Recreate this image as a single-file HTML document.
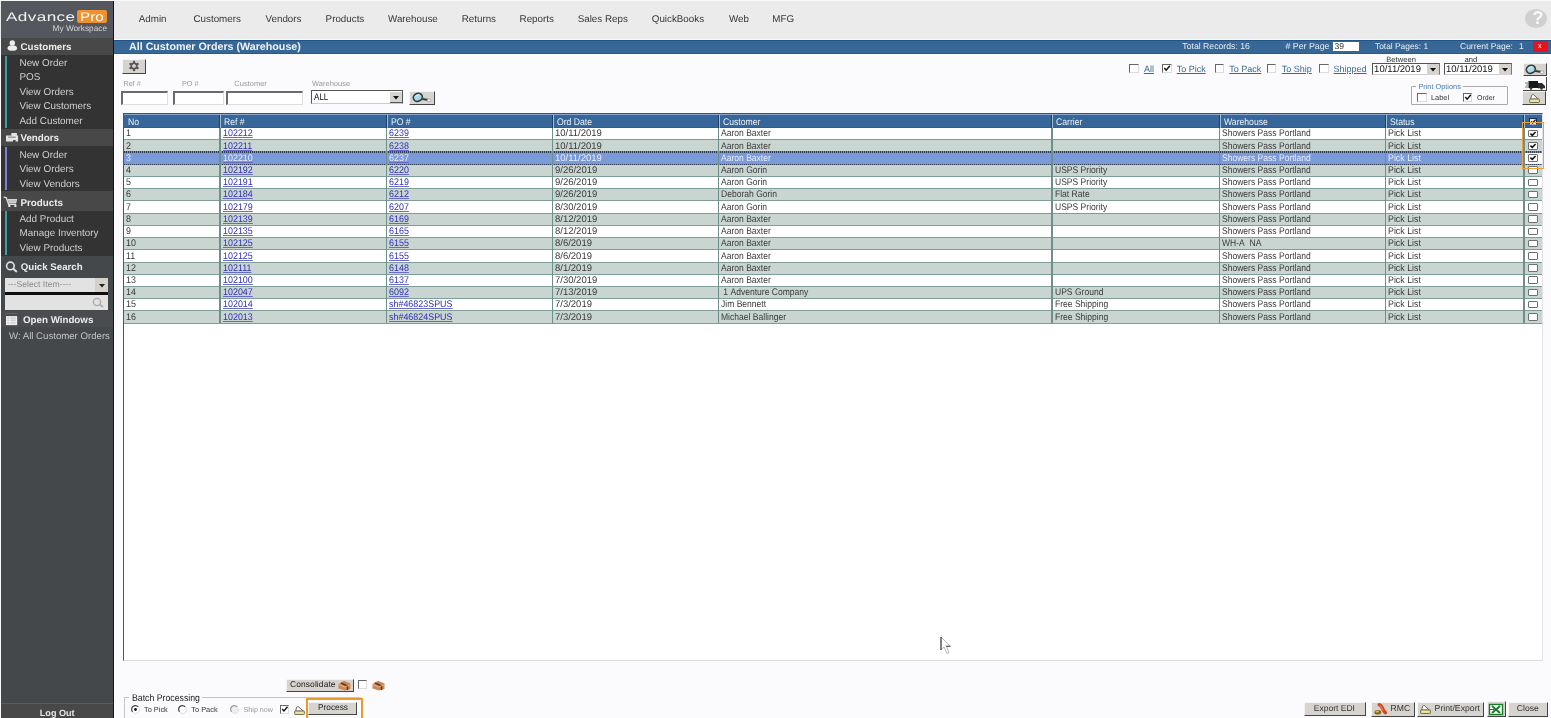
<!DOCTYPE html>
<html><head><meta charset="utf-8"><style>
*{margin:0;padding:0;box-sizing:border-box}
html,body{width:1551px;height:718px;overflow:hidden;background:#fbfbfd;font-family:"Liberation Sans",sans-serif;position:relative;-webkit-font-smoothing:antialiased;text-rendering:geometricPrecision}
.a{position:absolute;white-space:nowrap;line-height:normal}
svg.a{overflow:visible}
.btn{position:absolute;background:#d7d4d0;border-top:1px solid #f4f4f4;border-left:1px solid #f4f4f4;border-right:1.5px solid #444;border-bottom:1.5px solid #444}
.inp{position:absolute;background:#fff;border:1px solid #dedede;border-top:2px solid #6a6a6a;border-left:2px solid #6a6a6a}
</style></head>
<body>
<div id="root" style="position:absolute;left:0;top:0;width:1551px;height:718px;will-change:transform">
<div class="a" style="left:0.00px;top:0.00px;width:1551.00px;height:39.00px;background:#ebebeb;border-top:1px solid #f8f8f8"></div>
<div class="a" style="left:138.80px;top:13.91px;font-size:9.8px;color:#363636;">Admin</div>
<div class="a" style="left:193.50px;top:13.91px;font-size:9.8px;color:#363636;">Customers</div>
<div class="a" style="left:265.50px;top:13.91px;font-size:9.8px;color:#363636;">Vendors</div>
<div class="a" style="left:325.60px;top:13.91px;font-size:9.8px;color:#363636;">Products</div>
<div class="a" style="left:388.00px;top:13.91px;font-size:9.8px;color:#363636;">Warehouse</div>
<div class="a" style="left:461.70px;top:13.91px;font-size:9.8px;color:#363636;">Returns</div>
<div class="a" style="left:519.60px;top:13.91px;font-size:9.8px;color:#363636;">Reports</div>
<div class="a" style="left:577.70px;top:13.91px;font-size:9.8px;color:#363636;">Sales Reps</div>
<div class="a" style="left:651.80px;top:13.91px;font-size:9.8px;color:#363636;">QuickBooks</div>
<div class="a" style="left:729.00px;top:13.91px;font-size:9.8px;color:#363636;">Web</div>
<div class="a" style="left:772.30px;top:13.91px;font-size:9.8px;color:#363636;">MFG</div>
<div class="a" style="left:1525.00px;top:8.60px;width:22.00px;height:19.00px;background:#d0d0d0;border-radius:50%"></div>
<div class="a" style="left:1532.20px;top:6.51px;font-size:18.5px;color:#f8f8f8;font-weight:bold">?</div>
<div class="a" style="left:1.00px;top:1.00px;width:113.00px;height:717.00px;background:#45484b;border-right:1px solid #151515"></div>
<div class="a" style="left:1.00px;top:1.00px;width:112.00px;height:37.00px;background:#54575e"></div>
<div class="a" style="left:6.30px;top:9.59px;font-size:12.5px;color:#f2f2f2;transform:scaleX(1.37);transform-origin:0 0;letter-spacing:0.3px">Advance</div>
<div class="a" style="left:77.00px;top:9.60px;width:30.00px;height:13.70px;background:#f0912c;border-radius:2px"></div>
<div class="a" style="left:79.50px;top:9.59px;font-size:12.5px;color:#fff;transform:scaleX(1.22);transform-origin:0 0">Pro</div>
<div class="a" style="left:52.60px;top:23.83px;font-size:8.25px;color:#d4d4d4;">My Workspace</div>
<div class="a" style="left:1.00px;top:38.00px;width:112.00px;height:17.00px;background:#484848"></div>
<div class="a" style="left:20.40px;top:42.03px;font-size:9.8px;color:#ececec;font-weight:bold">Customers</div>
<svg class="a" style="left:6px;top:39px" width="14" height="14" viewBox="0 0 14 14"><circle cx="6.3" cy="4" r="2.7" fill="#ececec"/><path d="M1.5 9.5 C1.5 7 3.5 6.6 6.3 6.6 C9.1 6.6 11.1 7 11.1 9.5 C11.1 11.3 9 11.8 6.3 11.8 C3.6 11.8 1.5 11.3 1.5 9.5Z" fill="#ececec"/></svg>
<div class="a" style="left:1.00px;top:55.00px;width:112.00px;height:73.50px;background:#333333"></div>
<div class="a" style="left:5.00px;top:56.00px;width:2.00px;height:71.50px;background:#3b9ea2"></div>
<div class="a" style="left:19.50px;top:58.38px;font-size:9.9px;color:#d0d0d0;">New Order</div>
<div class="a" style="left:19.50px;top:72.38px;font-size:9.9px;color:#d0d0d0;">POS</div>
<div class="a" style="left:19.50px;top:86.78px;font-size:9.9px;color:#d0d0d0;">View Orders</div>
<div class="a" style="left:19.50px;top:100.78px;font-size:9.9px;color:#d0d0d0;">View Customers</div>
<div class="a" style="left:19.50px;top:115.98px;font-size:9.9px;color:#d0d0d0;">Add Customer</div>
<div class="a" style="left:1.00px;top:128.50px;width:112.00px;height:17.80px;background:#484848"></div>
<div class="a" style="left:20.40px;top:133.43px;font-size:9.8px;color:#ececec;font-weight:bold">Vendors</div>
<svg class="a" style="left:5.9px;top:132.6px" width="12.1" height="8.4" viewBox="0 0 12.1 8.4"><path d="M5.4 0 H10.9 V2.4 H12.1 V8.4 H9.6 V7 H7 V8.4 H0 V2.4 H5.4Z" fill="#e4e4e4"/><rect x="2.1" y="3.6" width="7.7" height="1.2" fill="#888"/></svg>
<div class="a" style="left:1.00px;top:146.30px;width:112.00px;height:44.50px;background:#333333"></div>
<div class="a" style="left:5.00px;top:147.30px;width:2.00px;height:42.50px;background:#7c80d6"></div>
<div class="a" style="left:19.50px;top:149.68px;font-size:9.9px;color:#d0d0d0;">New Order</div>
<div class="a" style="left:19.50px;top:164.18px;font-size:9.9px;color:#d0d0d0;">View Orders</div>
<div class="a" style="left:19.50px;top:178.58px;font-size:9.9px;color:#d0d0d0;">View Vendors</div>
<div class="a" style="left:1.00px;top:190.80px;width:112.00px;height:19.90px;background:#484848"></div>
<div class="a" style="left:20.40px;top:198.03px;font-size:9.8px;color:#ececec;font-weight:bold">Products</div>
<svg class="a" style="left:3px;top:196px" width="16" height="12" viewBox="0 0 16 12"><path d="M1.2 1.2 L3.3 1.8 L5.6 8.2 H12.6" stroke="#ddd" stroke-width="1.4" fill="none" stroke-linecap="round"/><path d="M4.6 3 H14.2 L13.3 7 H5.8Z" fill="#d4d4d4"/><path d="M5 5 H13.6" stroke="#999" stroke-width="0.6"/><circle cx="6.3" cy="9.9" r="1.2" fill="#e4e4e4"/><circle cx="12.4" cy="9.9" r="1.2" fill="#e4e4e4"/></svg>
<div class="a" style="left:1.00px;top:210.70px;width:112.00px;height:44.90px;background:#333333"></div>
<div class="a" style="left:5.00px;top:211.20px;width:2.00px;height:43.90px;background:#3b9ea2"></div>
<div class="a" style="left:19.50px;top:214.08px;font-size:9.9px;color:#d0d0d0;">Add Product</div>
<div class="a" style="left:19.50px;top:228.38px;font-size:9.9px;color:#d0d0d0;">Manage Inventory</div>
<div class="a" style="left:19.50px;top:242.88px;font-size:9.9px;color:#d0d0d0;">View Products</div>
<div class="a" style="left:20.70px;top:261.83px;font-size:9.7px;color:#ececec;font-weight:bold">Quick Search</div>
<svg class="a" style="left:4px;top:260px" width="14" height="13" viewBox="0 0 14 13"><circle cx="6.4" cy="5.9" r="3.8" stroke="#e0e0e0" stroke-width="1.6" fill="none"/><path d="M9.3 8.8 L12.3 11.4" stroke="#e0e0e0" stroke-width="2" stroke-linecap="round"/></svg>
<div class="a" style="left:4.90px;top:277.90px;width:103.10px;height:14.60px;background:#e3e2e2"></div>
<div class="a" style="left:8.00px;top:279.38px;font-size:8.6px;color:#8a8a8a;">---Select Item----</div>
<div class="a" style="left:95.40px;top:277.90px;width:12.60px;height:14.60px;background:#d5d1c9"></div>
<svg class="a" style="left:98.5px;top:283.5px" width="6" height="4"><path d="M0 0 L6 0 L3 3.5 Z" fill="#222"/></svg>
<div class="a" style="left:4.90px;top:292.40px;width:103.10px;height:2.20px;background:#0e0e0e"></div>
<div class="a" style="left:4.90px;top:294.60px;width:103.10px;height:15.00px;background:#e3e2e2"></div>
<svg class="a" style="left:91px;top:297px" width="14" height="11"><circle cx="6" cy="5" r="3.6" stroke="#aaa" stroke-width="1.4" fill="none"/><path d="M8.6 7.4 L12 10" stroke="#aaa" stroke-width="1.8"/></svg>
<div class="a" style="left:1.00px;top:311.00px;width:112.00px;height:16.00px;background:#4a4c4f"></div>
<div class="a" style="left:23.00px;top:315.03px;font-size:9.75px;color:#ececec;font-weight:bold">Open Windows</div>
<div class="a" style="left:5.20px;top:313.00px;width:12.00px;height:1.40px;background:#606062"></div>
<svg class="a" style="left:5.6px;top:315.6px" width="11.2" height="9.2" viewBox="0 0 11.4 9.2"><rect width="11.4" height="9.2" fill="#efefef"/><path d="M1.3 2 H3.3 M4.5 2 H10 M1.3 4.2 H3.3 M4.5 4.2 H10 M1.3 7 H3.3 M4.5 7 H10" stroke="#aaa" stroke-width="0.7"/></svg>
<div class="a" style="left:9.00px;top:330.84px;font-size:9.65px;color:#c4c4c4;">W: All Customer Orders</div>
<div class="a" style="left:1.00px;top:702.50px;width:112.00px;height:15.50px;background:#484848;border-top:1px solid #5c5c5c"></div>
<div class="a" style="left:39.80px;top:707.56px;font-size:9.1px;color:#e6e6e6;font-weight:bold">Log Out</div>
<div class="a" style="left:114.00px;top:39.70px;width:1437.00px;height:14.00px;background:#376797;border-top:1px solid #235284;border-bottom:1px solid #2b5a8a"></div>
<div class="a" style="left:129.00px;top:41.07px;font-size:10.7px;color:#f2f4f6;font-weight:bold">All Customer Orders (Warehouse)</div>
<div class="a" style="left:1182.30px;top:40.98px;font-size:8.7px;color:#e8eef4;">Total Records: 16</div>
<div class="a" style="left:1285.50px;top:40.99px;font-size:8.8px;color:#e8eef4;"># Per Page</div>
<div class="a" style="left:1333.40px;top:42.00px;width:25.30px;height:9.00px;background:#fff"></div>
<div class="a" style="left:1334.50px;top:40.95px;font-size:8.5px;color:#333;">39</div>
<div class="a" style="left:1375.00px;top:40.94px;font-size:8.4px;color:#e8eef4;">Total Pages: 1</div>
<div class="a" style="left:1460.00px;top:40.95px;font-size:8.5px;color:#e8eef4;">Current Page:</div>
<div class="a" style="left:1519.00px;top:40.95px;font-size:8.5px;color:#e8eef4;">1</div>
<div class="a" style="left:1533.00px;top:41.40px;width:15.40px;height:10.60px;background:#e5141c"></div>
<div class="a" style="left:1538.00px;top:43.41px;font-size:7px;color:#fff;">x</div>
<div class="btn" style="left:122px;top:59px;width:24.3px;height:14.6px"></div>
<svg class="a" style="left:127.8px;top:60px" width="12" height="12" viewBox="-6 -6 12 12"><g fill="#555"><circle cx="0.00" cy="-4.00" r="1.25"/><circle cx="3.46" cy="-2.00" r="1.25"/><circle cx="3.46" cy="2.00" r="1.25"/><circle cx="0.00" cy="4.00" r="1.25"/><circle cx="-3.46" cy="2.00" r="1.25"/><circle cx="-3.46" cy="-2.00" r="1.25"/></g><circle r="2.75" fill="none" stroke="#555" stroke-width="1.7"/></svg>
<div class="a" style="left:123.40px;top:78.76px;font-size:7.3px;color:#999;">Ref #</div>
<div class="a" style="left:182.00px;top:78.76px;font-size:7.3px;color:#999;">PO #</div>
<div class="a" style="left:234.30px;top:79.45px;font-size:7.5px;color:#999;">Customer</div>
<div class="a" style="left:312.00px;top:79.45px;font-size:7.5px;color:#999;">Warehouse</div>
<div class="inp" style="left:121.2px;top:90.7px;width:47px;height:14px"></div>
<div class="inp" style="left:173.4px;top:90.7px;width:50.2px;height:14px"></div>
<div class="inp" style="left:225.9px;top:90.7px;width:77.1px;height:14px"></div>
<div class="a" style="left:311.10px;top:90.00px;width:92.00px;height:14.20px;background:#fff;border-top:1.5px solid #555;border-left:1.5px solid #555;border-right:1.5px solid #555;border-bottom:1px solid #ccc"></div>
<div class="a" style="left:313.50px;top:92.14px;font-size:9.6px;color:#111;transform:scaleX(0.84);transform-origin:0 0">ALL</div>
<div class="a" style="left:390.00px;top:91.50px;width:12.50px;height:11.60px;background:#d7d4d0;border-right:1px solid #555;border-bottom:1px solid #555"></div>
<svg class="a" style="left:393.3px;top:95.5px" width="6" height="4"><path d="M0 0 L6 0 L3 3.5 Z" fill="#111"/></svg>
<div class="btn" style="left:409.3px;top:91.4px;width:26px;height:14px"></div>
<svg class="a" style="left:411.80px;top:92.20px" width="20" height="12" viewBox="0 0 20 12"><ellipse cx="5.8" cy="5.3" rx="4.6" ry="3.9" transform="rotate(-25 5.8 5.3)" fill="#a8dae6" stroke="#2e3c40" stroke-width="1.6"/><path d="M3.5 4.5 Q5 2.6 7.5 3" stroke="#d8f4fa" stroke-width="1.2" fill="none"/><path d="M9.8 6.6 L16 8" stroke="#3a3a3a" stroke-width="2.2"/><path d="M10.5 6 L15.5 6.8" stroke="#999" stroke-width="0.6"/><ellipse cx="17" cy="8.3" rx="1.8" ry="1.5" fill="#f4f4f4" stroke="#888" stroke-width="0.6"/></svg>
<div class="a" style="left:1129.40px;top:64.00px;width:9.60px;height:8.60px;background:#fff;border-top:1.5px solid #666;border-left:1.5px solid #666;border-right:1px solid #ddd;border-bottom:1px solid #ddd"></div>
<div class="a" style="left:1143.90px;top:63.94px;font-size:9px;color:#3b6a88;text-decoration:underline">All</div>
<div class="a" style="left:1162.00px;top:64.00px;width:9.60px;height:8.60px;background:#fff;border-top:1.5px solid #666;border-left:1.5px solid #666;border-right:1px solid #ddd;border-bottom:1px solid #ddd"></div>
<svg class="a" style="left:1162.00px;top:64.00px" width="9.6" height="8.6" viewBox="0 0 10 9"><path d="M2.4 4.2 L4.3 6.4 L8.2 1.8" stroke="#111" stroke-width="1.5" fill="none"/></svg>
<div class="a" style="left:1176.70px;top:63.94px;font-size:9px;color:#3b6a88;text-decoration:underline">To Pick</div>
<div class="a" style="left:1214.80px;top:64.00px;width:9.60px;height:8.60px;background:#fff;border-top:1.5px solid #666;border-left:1.5px solid #666;border-right:1px solid #ddd;border-bottom:1px solid #ddd"></div>
<div class="a" style="left:1229.30px;top:63.94px;font-size:9px;color:#3b6a88;text-decoration:underline">To Pack</div>
<div class="a" style="left:1266.70px;top:64.00px;width:9.60px;height:8.60px;background:#fff;border-top:1.5px solid #666;border-left:1.5px solid #666;border-right:1px solid #ddd;border-bottom:1px solid #ddd"></div>
<div class="a" style="left:1281.80px;top:63.94px;font-size:9px;color:#3b6a88;text-decoration:underline">To Ship</div>
<div class="a" style="left:1319.00px;top:64.00px;width:9.60px;height:8.60px;background:#fff;border-top:1.5px solid #666;border-left:1.5px solid #666;border-right:1px solid #ddd;border-bottom:1px solid #ddd"></div>
<div class="a" style="left:1333.60px;top:63.94px;font-size:9px;color:#3b6a88;text-decoration:underline">Shipped</div>
<div class="a" style="left:1386.30px;top:54.55px;font-size:7.6px;color:#333;">Between</div>
<div class="a" style="left:1464.50px;top:54.55px;font-size:7.6px;color:#333;">and</div>
<div class="a" style="left:1371.60px;top:62.60px;width:68.70px;height:12.80px;background:#fff;border-top:1.5px solid #555;border-left:1.5px solid #555;border-right:1.5px solid #777;border-bottom:1px solid #ccc"></div>
<div class="a" style="left:1374.10px;top:63.54px;font-size:9.5px;color:#111;">10/11/2019</div>
<div class="a" style="left:1426.60px;top:63.60px;width:12.50px;height:11.00px;background:#d7d4d0"></div>
<svg class="a" style="left:1430.10px;top:67.5px" width="6" height="4"><path d="M0 0 L6 0 L3 3.5 Z" fill="#111"/></svg>
<div class="a" style="left:1443.50px;top:62.60px;width:68.70px;height:12.80px;background:#fff;border-top:1.5px solid #555;border-left:1.5px solid #555;border-right:1.5px solid #777;border-bottom:1px solid #ccc"></div>
<div class="a" style="left:1446.00px;top:63.54px;font-size:9.5px;color:#111;">10/11/2019</div>
<div class="a" style="left:1498.50px;top:63.60px;width:12.50px;height:11.00px;background:#d7d4d0"></div>
<svg class="a" style="left:1502.00px;top:67.5px" width="6" height="4"><path d="M0 0 L6 0 L3 3.5 Z" fill="#111"/></svg>
<div class="a" style="left:1411.20px;top:85.60px;width:96.50px;height:19.00px;border:1px solid #aaa;border-radius:1px"></div>
<div class="a" style="left:1416.00px;top:83.00px;width:47.00px;height:6.00px;background:#fbfbfd"></div>
<div class="a" style="left:1418.40px;top:81.66px;font-size:7.35px;color:#4a7ab0;">Print Options</div>
<div class="a" style="left:1417.20px;top:93.40px;width:9.60px;height:8.60px;background:#fff;border-top:1.5px solid #666;border-left:1.5px solid #666;border-right:1px solid #ddd;border-bottom:1px solid #ddd"></div>
<div class="a" style="left:1431.00px;top:93.06px;font-size:7.4px;color:#333;">Label</div>
<div class="a" style="left:1462.70px;top:93.40px;width:9.60px;height:8.60px;background:#fff;border-top:1.5px solid #666;border-left:1.5px solid #666;border-right:1px solid #ddd;border-bottom:1px solid #ddd"></div>
<svg class="a" style="left:1462.70px;top:93.40px" width="9.6" height="8.6" viewBox="0 0 10 9"><path d="M2.4 4.2 L4.3 6.4 L8.2 1.8" stroke="#111" stroke-width="1.5" fill="none"/></svg>
<div class="a" style="left:1477.00px;top:95.01px;font-size:7px;color:#333;">Order</div>
<div class="btn" style="left:1522.5px;top:62.9px;width:24.5px;height:13.3px"></div>
<svg class="a" style="left:1525.00px;top:63.70px" width="20" height="12" viewBox="0 0 20 12"><ellipse cx="5.8" cy="5.3" rx="4.6" ry="3.9" transform="rotate(-25 5.8 5.3)" fill="#a8dae6" stroke="#2e3c40" stroke-width="1.6"/><path d="M3.5 4.5 Q5 2.6 7.5 3" stroke="#d8f4fa" stroke-width="1.2" fill="none"/><path d="M9.8 6.6 L16 8" stroke="#3a3a3a" stroke-width="2.2"/><path d="M10.5 6 L15.5 6.8" stroke="#999" stroke-width="0.6"/><ellipse cx="17" cy="8.3" rx="1.8" ry="1.5" fill="#f4f4f4" stroke="#888" stroke-width="0.6"/></svg>
<div class="a" style="left:1522.50px;top:77.40px;width:24.50px;height:13.20px;border-right:1.5px solid #444;border-bottom:1.5px solid #444"></div>
<svg class="a" style="left:1524px;top:80px" width="22" height="10" viewBox="0 0 22 10"><path d="M1 3h3M2 5h2M1 7h3" stroke="#555" stroke-width="0.8"/><rect x="4.5" y="1" width="9.5" height="7" fill="#1a1a1a"/><path d="M14 3 h4 l3 3 v2.2 h-7z" fill="#2a2a2a"/><circle cx="7" cy="8.5" r="1.3" fill="#333"/><circle cx="17.5" cy="8.5" r="1.3" fill="#333"/></svg>
<div class="btn" style="left:1522px;top:90.8px;width:24px;height:14.6px"></div>
<svg class="a" style="left:1529.00px;top:93.50px" width="11" height="9" viewBox="0 0 11 9"><path d="M1.6 5.2 L2.6 1.2 Q3.2 0.4 4.4 0.6 L9.4 5.2 Z" fill="#fafafa" stroke="#555" stroke-width="0.9"/><rect x="0.6" y="5" width="9.8" height="3.5" rx="0.6" fill="#e6df8c" stroke="#6a6a4a" stroke-width="0.9"/><path d="M2 6.6 H9" stroke="#f6f2c0" stroke-width="0.6"/></svg>
<div class="a" style="left:123.00px;top:112.80px;width:1419.50px;height:548.70px;background:#fff;border-left:1.5px solid #555;border-top:1.3px solid #4a5058;border-right:1px solid #e4e4e8;border-bottom:1px solid #dcdce0"></div>
<div class="a" style="left:124.00px;top:114.00px;width:1417.50px;height:13.60px;background:#36669a;border-top:1.2px solid #8aa8cc"></div>
<div class="a" style="left:124.00px;top:126.80px;width:1417.50px;height:0.80px;background:#3d5a7c"></div>
<div class="a" style="left:127.60px;top:116.64px;font-size:9.6px;color:#eef2f6;transform:scaleX(0.9);transform-origin:0 0">No</div>
<div class="a" style="left:224.10px;top:116.64px;font-size:9.6px;color:#eef2f6;transform:scaleX(0.9);transform-origin:0 0">Ref #</div>
<div class="a" style="left:219.00px;top:114.50px;width:1.00px;height:13.10px;background:#1f3f66"></div>
<div class="a" style="left:220.00px;top:114.50px;width:1.00px;height:13.10px;background:#a9bdd0"></div>
<div class="a" style="left:390.60px;top:116.64px;font-size:9.6px;color:#eef2f6;transform:scaleX(0.9);transform-origin:0 0">PO #</div>
<div class="a" style="left:385.50px;top:114.50px;width:1.00px;height:13.10px;background:#1f3f66"></div>
<div class="a" style="left:386.50px;top:114.50px;width:1.00px;height:13.10px;background:#a9bdd0"></div>
<div class="a" style="left:556.60px;top:116.64px;font-size:9.6px;color:#eef2f6;transform:scaleX(0.9);transform-origin:0 0">Ord Date</div>
<div class="a" style="left:551.50px;top:114.50px;width:1.00px;height:13.10px;background:#1f3f66"></div>
<div class="a" style="left:552.50px;top:114.50px;width:1.00px;height:13.10px;background:#a9bdd0"></div>
<div class="a" style="left:722.60px;top:116.64px;font-size:9.6px;color:#eef2f6;transform:scaleX(0.9);transform-origin:0 0">Customer</div>
<div class="a" style="left:717.50px;top:114.50px;width:1.00px;height:13.10px;background:#1f3f66"></div>
<div class="a" style="left:718.50px;top:114.50px;width:1.00px;height:13.10px;background:#a9bdd0"></div>
<div class="a" style="left:1056.10px;top:116.64px;font-size:9.6px;color:#eef2f6;transform:scaleX(0.9);transform-origin:0 0">Carrier</div>
<div class="a" style="left:1051.00px;top:114.50px;width:1.00px;height:13.10px;background:#1f3f66"></div>
<div class="a" style="left:1052.00px;top:114.50px;width:1.00px;height:13.10px;background:#a9bdd0"></div>
<div class="a" style="left:1223.60px;top:116.64px;font-size:9.6px;color:#eef2f6;transform:scaleX(0.9);transform-origin:0 0">Warehouse</div>
<div class="a" style="left:1218.50px;top:114.50px;width:1.00px;height:13.10px;background:#1f3f66"></div>
<div class="a" style="left:1219.50px;top:114.50px;width:1.00px;height:13.10px;background:#a9bdd0"></div>
<div class="a" style="left:1389.60px;top:116.64px;font-size:9.6px;color:#eef2f6;transform:scaleX(0.9);transform-origin:0 0">Status</div>
<div class="a" style="left:1384.50px;top:114.50px;width:1.00px;height:13.10px;background:#1f3f66"></div>
<div class="a" style="left:1385.50px;top:114.50px;width:1.00px;height:13.10px;background:#a9bdd0"></div>
<div class="a" style="left:1523.00px;top:114.50px;width:1.00px;height:13.10px;background:#1f3f66"></div>
<div class="a" style="left:1524.00px;top:114.50px;width:1.00px;height:13.10px;background:#a9bdd0"></div>
<div class="a" style="left:1529.00px;top:117.90px;width:8.20px;height:7.20px;background:#e8e8e8;border:1px solid #1e2e50;border-bottom-color:#aab"></div>
<svg class="a" style="left:1529px;top:117.9px" width="8.2" height="7.2" viewBox="0 0 8.2 7.2"><path d="M2 3.4 L3.6 5 L6.6 1.6" stroke="#222" stroke-width="1.4" fill="none"/></svg>
<div class="a" style="left:124.00px;top:127.60px;width:1417.50px;height:12.22px;background:#ffffff"></div>
<div class="a" style="left:126.40px;top:128.34px;font-size:9.6px;color:#3a3a3a;transform:scaleX(0.93);transform-origin:0 0;">1</div>
<div class="a" style="left:222.90px;top:128.34px;font-size:9.6px;color:#3030b8;text-decoration:underline;text-decoration-color:#6a6ac0;transform:scaleX(0.93);transform-origin:0 0;">102212</div>
<div class="a" style="left:389.40px;top:128.34px;font-size:9.6px;color:#3030b8;text-decoration:underline;text-decoration-color:#6a6ac0;transform:scaleX(0.93);transform-origin:0 0;">6239</div>
<div class="a" style="left:555.40px;top:128.34px;font-size:9.6px;color:#3a3a3a;transform:scaleX(0.99);transform-origin:0 0;">10/11/2019</div>
<div class="a" style="left:721.40px;top:128.34px;font-size:9.6px;color:#3a3a3a;transform:scaleX(0.89);transform-origin:0 0;">Aaron&nbsp;Baxter</div>
<div class="a" style="left:1222.40px;top:128.34px;font-size:9.6px;color:#3a3a3a;transform:scaleX(0.89);transform-origin:0 0;">Showers&nbsp;Pass&nbsp;Portland</div>
<div class="a" style="left:1388.40px;top:128.34px;font-size:9.6px;color:#3a3a3a;transform:scaleX(0.92);transform-origin:0 0;">Pick&nbsp;List</div>
<div class="a" style="left:1528.10px;top:129.80px;width:9.70px;height:7.60px;background:#fff;border:1.2px solid #707070;border-radius:1px"></div>
<svg class="a" style="left:1528.1px;top:129.80px" width="9.7" height="7.6" viewBox="0 0 9.7 7.6"><path d="M2.4 3.6 L4.3 5.4 L7.6 2" stroke="#111" stroke-width="1.5" fill="none"/></svg>
<div class="a" style="left:124.00px;top:139.82px;width:1417.50px;height:12.22px;background:#c9d5d1"></div>
<div class="a" style="left:126.40px;top:140.56px;font-size:9.6px;color:#3a3a3a;transform:scaleX(0.93);transform-origin:0 0;">2</div>
<div class="a" style="left:222.90px;top:140.56px;font-size:9.6px;color:#3030b8;text-decoration:underline;text-decoration-color:#6a6ac0;transform:scaleX(0.93);transform-origin:0 0;">102211</div>
<div class="a" style="left:389.40px;top:140.56px;font-size:9.6px;color:#3030b8;text-decoration:underline;text-decoration-color:#6a6ac0;transform:scaleX(0.93);transform-origin:0 0;">6238</div>
<div class="a" style="left:555.40px;top:140.56px;font-size:9.6px;color:#3a3a3a;transform:scaleX(0.99);transform-origin:0 0;">10/11/2019</div>
<div class="a" style="left:721.40px;top:140.56px;font-size:9.6px;color:#3a3a3a;transform:scaleX(0.89);transform-origin:0 0;">Aaron&nbsp;Baxter</div>
<div class="a" style="left:1222.40px;top:140.56px;font-size:9.6px;color:#3a3a3a;transform:scaleX(0.89);transform-origin:0 0;">Showers&nbsp;Pass&nbsp;Portland</div>
<div class="a" style="left:1388.40px;top:140.56px;font-size:9.6px;color:#3a3a3a;transform:scaleX(0.92);transform-origin:0 0;">Pick&nbsp;List</div>
<div class="a" style="left:1528.10px;top:142.02px;width:9.70px;height:7.60px;background:#fff;border:1.2px solid #707070;border-radius:1px"></div>
<svg class="a" style="left:1528.1px;top:142.02px" width="9.7" height="7.6" viewBox="0 0 9.7 7.6"><path d="M2.4 3.6 L4.3 5.4 L7.6 2" stroke="#111" stroke-width="1.5" fill="none"/></svg>
<div class="a" style="left:124.00px;top:152.04px;width:1417.50px;height:12.22px;background:#7a9ad8"></div>
<div class="a" style="left:1524.00px;top:152.04px;width:17.50px;height:12.22px;background:#fff"></div>
<div class="a" style="left:126.40px;top:152.78px;font-size:9.6px;color:#e9eefb;transform:scaleX(0.93);transform-origin:0 0;">3</div>
<div class="a" style="left:222.90px;top:152.78px;font-size:9.6px;color:#e9eefb;text-decoration:underline;text-decoration-color:#6a6ac0;transform:scaleX(0.93);transform-origin:0 0;">102210</div>
<div class="a" style="left:389.40px;top:152.78px;font-size:9.6px;color:#e9eefb;text-decoration:underline;text-decoration-color:#6a6ac0;transform:scaleX(0.93);transform-origin:0 0;">6237</div>
<div class="a" style="left:555.40px;top:152.78px;font-size:9.6px;color:#e9eefb;transform:scaleX(0.99);transform-origin:0 0;">10/11/2019</div>
<div class="a" style="left:721.40px;top:152.78px;font-size:9.6px;color:#e9eefb;transform:scaleX(0.89);transform-origin:0 0;">Aaron&nbsp;Baxter</div>
<div class="a" style="left:1222.40px;top:152.78px;font-size:9.6px;color:#e9eefb;transform:scaleX(0.89);transform-origin:0 0;">Showers&nbsp;Pass&nbsp;Portland</div>
<div class="a" style="left:1388.40px;top:152.78px;font-size:9.6px;color:#e9eefb;transform:scaleX(0.92);transform-origin:0 0;">Pick&nbsp;List</div>
<div class="a" style="left:1528.10px;top:154.24px;width:9.70px;height:7.60px;background:#fff;border:1.2px solid #707070;border-radius:1px"></div>
<svg class="a" style="left:1528.1px;top:154.24px" width="9.7" height="7.6" viewBox="0 0 9.7 7.6"><path d="M2.4 3.6 L4.3 5.4 L7.6 2" stroke="#111" stroke-width="1.5" fill="none"/></svg>
<div class="a" style="left:124.00px;top:164.26px;width:1417.50px;height:12.22px;background:#c9d5d1"></div>
<div class="a" style="left:126.40px;top:165.00px;font-size:9.6px;color:#3a3a3a;transform:scaleX(0.93);transform-origin:0 0;">4</div>
<div class="a" style="left:222.90px;top:165.00px;font-size:9.6px;color:#3030b8;text-decoration:underline;text-decoration-color:#6a6ac0;transform:scaleX(0.93);transform-origin:0 0;">102192</div>
<div class="a" style="left:389.40px;top:165.00px;font-size:9.6px;color:#3030b8;text-decoration:underline;text-decoration-color:#6a6ac0;transform:scaleX(0.93);transform-origin:0 0;">6220</div>
<div class="a" style="left:555.40px;top:165.00px;font-size:9.6px;color:#3a3a3a;transform:scaleX(0.99);transform-origin:0 0;">9/26/2019</div>
<div class="a" style="left:721.40px;top:165.00px;font-size:9.6px;color:#3a3a3a;transform:scaleX(0.89);transform-origin:0 0;">Aaron&nbsp;Gorin</div>
<div class="a" style="left:1054.90px;top:165.00px;font-size:9.6px;color:#3a3a3a;transform:scaleX(0.89);transform-origin:0 0;">USPS&nbsp;Priority</div>
<div class="a" style="left:1222.40px;top:165.00px;font-size:9.6px;color:#3a3a3a;transform:scaleX(0.89);transform-origin:0 0;">Showers&nbsp;Pass&nbsp;Portland</div>
<div class="a" style="left:1388.40px;top:165.00px;font-size:9.6px;color:#3a3a3a;transform:scaleX(0.92);transform-origin:0 0;">Pick&nbsp;List</div>
<div class="a" style="left:1528.10px;top:166.46px;width:9.70px;height:7.60px;background:#fff;border:1.2px solid #707070;border-radius:1px"></div>
<div class="a" style="left:124.00px;top:176.48px;width:1417.50px;height:12.22px;background:#ffffff"></div>
<div class="a" style="left:126.40px;top:177.22px;font-size:9.6px;color:#3a3a3a;transform:scaleX(0.93);transform-origin:0 0;">5</div>
<div class="a" style="left:222.90px;top:177.22px;font-size:9.6px;color:#3030b8;text-decoration:underline;text-decoration-color:#6a6ac0;transform:scaleX(0.93);transform-origin:0 0;">102191</div>
<div class="a" style="left:389.40px;top:177.22px;font-size:9.6px;color:#3030b8;text-decoration:underline;text-decoration-color:#6a6ac0;transform:scaleX(0.93);transform-origin:0 0;">6219</div>
<div class="a" style="left:555.40px;top:177.22px;font-size:9.6px;color:#3a3a3a;transform:scaleX(0.99);transform-origin:0 0;">9/26/2019</div>
<div class="a" style="left:721.40px;top:177.22px;font-size:9.6px;color:#3a3a3a;transform:scaleX(0.89);transform-origin:0 0;">Aaron&nbsp;Gorin</div>
<div class="a" style="left:1054.90px;top:177.22px;font-size:9.6px;color:#3a3a3a;transform:scaleX(0.89);transform-origin:0 0;">USPS&nbsp;Priority</div>
<div class="a" style="left:1222.40px;top:177.22px;font-size:9.6px;color:#3a3a3a;transform:scaleX(0.89);transform-origin:0 0;">Showers&nbsp;Pass&nbsp;Portland</div>
<div class="a" style="left:1388.40px;top:177.22px;font-size:9.6px;color:#3a3a3a;transform:scaleX(0.92);transform-origin:0 0;">Pick&nbsp;List</div>
<div class="a" style="left:1528.10px;top:178.68px;width:9.70px;height:7.60px;background:#fff;border:1.2px solid #707070;border-radius:1px"></div>
<div class="a" style="left:124.00px;top:188.70px;width:1417.50px;height:12.22px;background:#c9d5d1"></div>
<div class="a" style="left:126.40px;top:189.44px;font-size:9.6px;color:#3a3a3a;transform:scaleX(0.93);transform-origin:0 0;">6</div>
<div class="a" style="left:222.90px;top:189.44px;font-size:9.6px;color:#3030b8;text-decoration:underline;text-decoration-color:#6a6ac0;transform:scaleX(0.93);transform-origin:0 0;">102184</div>
<div class="a" style="left:389.40px;top:189.44px;font-size:9.6px;color:#3030b8;text-decoration:underline;text-decoration-color:#6a6ac0;transform:scaleX(0.93);transform-origin:0 0;">6212</div>
<div class="a" style="left:555.40px;top:189.44px;font-size:9.6px;color:#3a3a3a;transform:scaleX(0.99);transform-origin:0 0;">9/26/2019</div>
<div class="a" style="left:721.40px;top:189.44px;font-size:9.6px;color:#3a3a3a;transform:scaleX(0.89);transform-origin:0 0;">Deborah&nbsp;Gorin</div>
<div class="a" style="left:1054.90px;top:189.44px;font-size:9.6px;color:#3a3a3a;transform:scaleX(0.89);transform-origin:0 0;">Flat&nbsp;Rate</div>
<div class="a" style="left:1222.40px;top:189.44px;font-size:9.6px;color:#3a3a3a;transform:scaleX(0.89);transform-origin:0 0;">Showers&nbsp;Pass&nbsp;Portland</div>
<div class="a" style="left:1388.40px;top:189.44px;font-size:9.6px;color:#3a3a3a;transform:scaleX(0.92);transform-origin:0 0;">Pick&nbsp;List</div>
<div class="a" style="left:1528.10px;top:190.90px;width:9.70px;height:7.60px;background:#fff;border:1.2px solid #707070;border-radius:1px"></div>
<div class="a" style="left:124.00px;top:200.92px;width:1417.50px;height:12.22px;background:#ffffff"></div>
<div class="a" style="left:126.40px;top:201.66px;font-size:9.6px;color:#3a3a3a;transform:scaleX(0.93);transform-origin:0 0;">7</div>
<div class="a" style="left:222.90px;top:201.66px;font-size:9.6px;color:#3030b8;text-decoration:underline;text-decoration-color:#6a6ac0;transform:scaleX(0.93);transform-origin:0 0;">102179</div>
<div class="a" style="left:389.40px;top:201.66px;font-size:9.6px;color:#3030b8;text-decoration:underline;text-decoration-color:#6a6ac0;transform:scaleX(0.93);transform-origin:0 0;">6207</div>
<div class="a" style="left:555.40px;top:201.66px;font-size:9.6px;color:#3a3a3a;transform:scaleX(0.99);transform-origin:0 0;">8/30/2019</div>
<div class="a" style="left:721.40px;top:201.66px;font-size:9.6px;color:#3a3a3a;transform:scaleX(0.89);transform-origin:0 0;">Aaron&nbsp;Gorin</div>
<div class="a" style="left:1054.90px;top:201.66px;font-size:9.6px;color:#3a3a3a;transform:scaleX(0.89);transform-origin:0 0;">USPS&nbsp;Priority</div>
<div class="a" style="left:1222.40px;top:201.66px;font-size:9.6px;color:#3a3a3a;transform:scaleX(0.89);transform-origin:0 0;">Showers&nbsp;Pass&nbsp;Portland</div>
<div class="a" style="left:1388.40px;top:201.66px;font-size:9.6px;color:#3a3a3a;transform:scaleX(0.92);transform-origin:0 0;">Pick&nbsp;List</div>
<div class="a" style="left:1528.10px;top:203.12px;width:9.70px;height:7.60px;background:#fff;border:1.2px solid #707070;border-radius:1px"></div>
<div class="a" style="left:124.00px;top:213.14px;width:1417.50px;height:12.22px;background:#c9d5d1"></div>
<div class="a" style="left:126.40px;top:213.88px;font-size:9.6px;color:#3a3a3a;transform:scaleX(0.93);transform-origin:0 0;">8</div>
<div class="a" style="left:222.90px;top:213.88px;font-size:9.6px;color:#3030b8;text-decoration:underline;text-decoration-color:#6a6ac0;transform:scaleX(0.93);transform-origin:0 0;">102139</div>
<div class="a" style="left:389.40px;top:213.88px;font-size:9.6px;color:#3030b8;text-decoration:underline;text-decoration-color:#6a6ac0;transform:scaleX(0.93);transform-origin:0 0;">6169</div>
<div class="a" style="left:555.40px;top:213.88px;font-size:9.6px;color:#3a3a3a;transform:scaleX(0.99);transform-origin:0 0;">8/12/2019</div>
<div class="a" style="left:721.40px;top:213.88px;font-size:9.6px;color:#3a3a3a;transform:scaleX(0.89);transform-origin:0 0;">Aaron&nbsp;Baxter</div>
<div class="a" style="left:1222.40px;top:213.88px;font-size:9.6px;color:#3a3a3a;transform:scaleX(0.89);transform-origin:0 0;">Showers&nbsp;Pass&nbsp;Portland</div>
<div class="a" style="left:1388.40px;top:213.88px;font-size:9.6px;color:#3a3a3a;transform:scaleX(0.92);transform-origin:0 0;">Pick&nbsp;List</div>
<div class="a" style="left:1528.10px;top:215.34px;width:9.70px;height:7.60px;background:#fff;border:1.2px solid #707070;border-radius:1px"></div>
<div class="a" style="left:124.00px;top:225.36px;width:1417.50px;height:12.22px;background:#ffffff"></div>
<div class="a" style="left:126.40px;top:226.10px;font-size:9.6px;color:#3a3a3a;transform:scaleX(0.93);transform-origin:0 0;">9</div>
<div class="a" style="left:222.90px;top:226.10px;font-size:9.6px;color:#3030b8;text-decoration:underline;text-decoration-color:#6a6ac0;transform:scaleX(0.93);transform-origin:0 0;">102135</div>
<div class="a" style="left:389.40px;top:226.10px;font-size:9.6px;color:#3030b8;text-decoration:underline;text-decoration-color:#6a6ac0;transform:scaleX(0.93);transform-origin:0 0;">6165</div>
<div class="a" style="left:555.40px;top:226.10px;font-size:9.6px;color:#3a3a3a;transform:scaleX(0.99);transform-origin:0 0;">8/12/2019</div>
<div class="a" style="left:721.40px;top:226.10px;font-size:9.6px;color:#3a3a3a;transform:scaleX(0.89);transform-origin:0 0;">Aaron&nbsp;Baxter</div>
<div class="a" style="left:1222.40px;top:226.10px;font-size:9.6px;color:#3a3a3a;transform:scaleX(0.89);transform-origin:0 0;">Showers&nbsp;Pass&nbsp;Portland</div>
<div class="a" style="left:1388.40px;top:226.10px;font-size:9.6px;color:#3a3a3a;transform:scaleX(0.92);transform-origin:0 0;">Pick&nbsp;List</div>
<div class="a" style="left:1528.10px;top:227.56px;width:9.70px;height:7.60px;background:#fff;border:1.2px solid #707070;border-radius:1px"></div>
<div class="a" style="left:124.00px;top:237.58px;width:1417.50px;height:12.22px;background:#c9d5d1"></div>
<div class="a" style="left:126.40px;top:238.32px;font-size:9.6px;color:#3a3a3a;transform:scaleX(0.93);transform-origin:0 0;">10</div>
<div class="a" style="left:222.90px;top:238.32px;font-size:9.6px;color:#3030b8;text-decoration:underline;text-decoration-color:#6a6ac0;transform:scaleX(0.93);transform-origin:0 0;">102125</div>
<div class="a" style="left:389.40px;top:238.32px;font-size:9.6px;color:#3030b8;text-decoration:underline;text-decoration-color:#6a6ac0;transform:scaleX(0.93);transform-origin:0 0;">6155</div>
<div class="a" style="left:555.40px;top:238.32px;font-size:9.6px;color:#3a3a3a;transform:scaleX(0.99);transform-origin:0 0;">8/6/2019</div>
<div class="a" style="left:721.40px;top:238.32px;font-size:9.6px;color:#3a3a3a;transform:scaleX(0.89);transform-origin:0 0;">Aaron&nbsp;Baxter</div>
<div class="a" style="left:1222.40px;top:238.32px;font-size:9.6px;color:#3a3a3a;transform:scaleX(0.89);transform-origin:0 0;">WH-A&nbsp;&nbsp;NA</div>
<div class="a" style="left:1388.40px;top:238.32px;font-size:9.6px;color:#3a3a3a;transform:scaleX(0.92);transform-origin:0 0;">Pick&nbsp;List</div>
<div class="a" style="left:1528.10px;top:239.78px;width:9.70px;height:7.60px;background:#fff;border:1.2px solid #707070;border-radius:1px"></div>
<div class="a" style="left:124.00px;top:249.80px;width:1417.50px;height:12.22px;background:#ffffff"></div>
<div class="a" style="left:126.40px;top:250.54px;font-size:9.6px;color:#3a3a3a;transform:scaleX(0.93);transform-origin:0 0;">11</div>
<div class="a" style="left:222.90px;top:250.54px;font-size:9.6px;color:#3030b8;text-decoration:underline;text-decoration-color:#6a6ac0;transform:scaleX(0.93);transform-origin:0 0;">102125</div>
<div class="a" style="left:389.40px;top:250.54px;font-size:9.6px;color:#3030b8;text-decoration:underline;text-decoration-color:#6a6ac0;transform:scaleX(0.93);transform-origin:0 0;">6155</div>
<div class="a" style="left:555.40px;top:250.54px;font-size:9.6px;color:#3a3a3a;transform:scaleX(0.99);transform-origin:0 0;">8/6/2019</div>
<div class="a" style="left:721.40px;top:250.54px;font-size:9.6px;color:#3a3a3a;transform:scaleX(0.89);transform-origin:0 0;">Aaron&nbsp;Baxter</div>
<div class="a" style="left:1222.40px;top:250.54px;font-size:9.6px;color:#3a3a3a;transform:scaleX(0.89);transform-origin:0 0;">Showers&nbsp;Pass&nbsp;Portland</div>
<div class="a" style="left:1388.40px;top:250.54px;font-size:9.6px;color:#3a3a3a;transform:scaleX(0.92);transform-origin:0 0;">Pick&nbsp;List</div>
<div class="a" style="left:1528.10px;top:252.00px;width:9.70px;height:7.60px;background:#fff;border:1.2px solid #707070;border-radius:1px"></div>
<div class="a" style="left:124.00px;top:262.02px;width:1417.50px;height:12.22px;background:#c9d5d1"></div>
<div class="a" style="left:126.40px;top:262.76px;font-size:9.6px;color:#3a3a3a;transform:scaleX(0.93);transform-origin:0 0;">12</div>
<div class="a" style="left:222.90px;top:262.76px;font-size:9.6px;color:#3030b8;text-decoration:underline;text-decoration-color:#6a6ac0;transform:scaleX(0.93);transform-origin:0 0;">102111</div>
<div class="a" style="left:389.40px;top:262.76px;font-size:9.6px;color:#3030b8;text-decoration:underline;text-decoration-color:#6a6ac0;transform:scaleX(0.93);transform-origin:0 0;">6148</div>
<div class="a" style="left:555.40px;top:262.76px;font-size:9.6px;color:#3a3a3a;transform:scaleX(0.99);transform-origin:0 0;">8/1/2019</div>
<div class="a" style="left:721.40px;top:262.76px;font-size:9.6px;color:#3a3a3a;transform:scaleX(0.89);transform-origin:0 0;">Aaron&nbsp;Baxter</div>
<div class="a" style="left:1222.40px;top:262.76px;font-size:9.6px;color:#3a3a3a;transform:scaleX(0.89);transform-origin:0 0;">Showers&nbsp;Pass&nbsp;Portland</div>
<div class="a" style="left:1388.40px;top:262.76px;font-size:9.6px;color:#3a3a3a;transform:scaleX(0.92);transform-origin:0 0;">Pick&nbsp;List</div>
<div class="a" style="left:1528.10px;top:264.22px;width:9.70px;height:7.60px;background:#fff;border:1.2px solid #707070;border-radius:1px"></div>
<div class="a" style="left:124.00px;top:274.24px;width:1417.50px;height:12.22px;background:#ffffff"></div>
<div class="a" style="left:126.40px;top:274.98px;font-size:9.6px;color:#3a3a3a;transform:scaleX(0.93);transform-origin:0 0;">13</div>
<div class="a" style="left:222.90px;top:274.98px;font-size:9.6px;color:#3030b8;text-decoration:underline;text-decoration-color:#6a6ac0;transform:scaleX(0.93);transform-origin:0 0;">102100</div>
<div class="a" style="left:389.40px;top:274.98px;font-size:9.6px;color:#3030b8;text-decoration:underline;text-decoration-color:#6a6ac0;transform:scaleX(0.93);transform-origin:0 0;">6137</div>
<div class="a" style="left:555.40px;top:274.98px;font-size:9.6px;color:#3a3a3a;transform:scaleX(0.99);transform-origin:0 0;">7/30/2019</div>
<div class="a" style="left:721.40px;top:274.98px;font-size:9.6px;color:#3a3a3a;transform:scaleX(0.89);transform-origin:0 0;">Aaron&nbsp;Baxter</div>
<div class="a" style="left:1222.40px;top:274.98px;font-size:9.6px;color:#3a3a3a;transform:scaleX(0.89);transform-origin:0 0;">Showers&nbsp;Pass&nbsp;Portland</div>
<div class="a" style="left:1388.40px;top:274.98px;font-size:9.6px;color:#3a3a3a;transform:scaleX(0.92);transform-origin:0 0;">Pick&nbsp;List</div>
<div class="a" style="left:1528.10px;top:276.44px;width:9.70px;height:7.60px;background:#fff;border:1.2px solid #707070;border-radius:1px"></div>
<div class="a" style="left:124.00px;top:286.46px;width:1417.50px;height:12.22px;background:#c9d5d1"></div>
<div class="a" style="left:126.40px;top:287.20px;font-size:9.6px;color:#3a3a3a;transform:scaleX(0.93);transform-origin:0 0;">14</div>
<div class="a" style="left:222.90px;top:287.20px;font-size:9.6px;color:#3030b8;text-decoration:underline;text-decoration-color:#6a6ac0;transform:scaleX(0.93);transform-origin:0 0;">102047</div>
<div class="a" style="left:389.40px;top:287.20px;font-size:9.6px;color:#3030b8;text-decoration:underline;text-decoration-color:#6a6ac0;transform:scaleX(0.93);transform-origin:0 0;">6092</div>
<div class="a" style="left:555.40px;top:287.20px;font-size:9.6px;color:#3a3a3a;transform:scaleX(0.99);transform-origin:0 0;">7/13/2019</div>
<div class="a" style="left:721.40px;top:287.20px;font-size:9.6px;color:#3a3a3a;transform:scaleX(0.89);transform-origin:0 0;">&nbsp;1&nbsp;Adventure&nbsp;Company</div>
<div class="a" style="left:1054.90px;top:287.20px;font-size:9.6px;color:#3a3a3a;transform:scaleX(0.89);transform-origin:0 0;">UPS&nbsp;Ground</div>
<div class="a" style="left:1222.40px;top:287.20px;font-size:9.6px;color:#3a3a3a;transform:scaleX(0.89);transform-origin:0 0;">Showers&nbsp;Pass&nbsp;Portland</div>
<div class="a" style="left:1388.40px;top:287.20px;font-size:9.6px;color:#3a3a3a;transform:scaleX(0.92);transform-origin:0 0;">Pick&nbsp;List</div>
<div class="a" style="left:1528.10px;top:288.66px;width:9.70px;height:7.60px;background:#fff;border:1.2px solid #707070;border-radius:1px"></div>
<div class="a" style="left:124.00px;top:298.68px;width:1417.50px;height:12.22px;background:#ffffff"></div>
<div class="a" style="left:126.40px;top:299.42px;font-size:9.6px;color:#3a3a3a;transform:scaleX(0.93);transform-origin:0 0;">15</div>
<div class="a" style="left:222.90px;top:299.42px;font-size:9.6px;color:#3030b8;text-decoration:underline;text-decoration-color:#6a6ac0;transform:scaleX(0.93);transform-origin:0 0;">102014</div>
<div class="a" style="left:389.40px;top:299.42px;font-size:9.6px;color:#3030b8;text-decoration:underline;text-decoration-color:#6a6ac0;transform:scaleX(0.93);transform-origin:0 0;">sh#46823SPUS</div>
<div class="a" style="left:555.40px;top:299.42px;font-size:9.6px;color:#3a3a3a;transform:scaleX(0.99);transform-origin:0 0;">7/3/2019</div>
<div class="a" style="left:721.40px;top:299.42px;font-size:9.6px;color:#3a3a3a;transform:scaleX(0.89);transform-origin:0 0;">Jim&nbsp;Bennett</div>
<div class="a" style="left:1054.90px;top:299.42px;font-size:9.6px;color:#3a3a3a;transform:scaleX(0.89);transform-origin:0 0;">Free&nbsp;Shipping</div>
<div class="a" style="left:1222.40px;top:299.42px;font-size:9.6px;color:#3a3a3a;transform:scaleX(0.89);transform-origin:0 0;">Showers&nbsp;Pass&nbsp;Portland</div>
<div class="a" style="left:1388.40px;top:299.42px;font-size:9.6px;color:#3a3a3a;transform:scaleX(0.92);transform-origin:0 0;">Pick&nbsp;List</div>
<div class="a" style="left:1528.10px;top:300.88px;width:9.70px;height:7.60px;background:#fff;border:1.2px solid #707070;border-radius:1px"></div>
<div class="a" style="left:124.00px;top:310.90px;width:1417.50px;height:12.22px;background:#c9d5d1"></div>
<div class="a" style="left:126.40px;top:311.64px;font-size:9.6px;color:#3a3a3a;transform:scaleX(0.93);transform-origin:0 0;">16</div>
<div class="a" style="left:222.90px;top:311.64px;font-size:9.6px;color:#3030b8;text-decoration:underline;text-decoration-color:#6a6ac0;transform:scaleX(0.93);transform-origin:0 0;">102013</div>
<div class="a" style="left:389.40px;top:311.64px;font-size:9.6px;color:#3030b8;text-decoration:underline;text-decoration-color:#6a6ac0;transform:scaleX(0.93);transform-origin:0 0;">sh#46824SPUS</div>
<div class="a" style="left:555.40px;top:311.64px;font-size:9.6px;color:#3a3a3a;transform:scaleX(0.99);transform-origin:0 0;">7/3/2019</div>
<div class="a" style="left:721.40px;top:311.64px;font-size:9.6px;color:#3a3a3a;transform:scaleX(0.89);transform-origin:0 0;">Michael&nbsp;Ballinger</div>
<div class="a" style="left:1054.90px;top:311.64px;font-size:9.6px;color:#3a3a3a;transform:scaleX(0.89);transform-origin:0 0;">Free&nbsp;Shipping</div>
<div class="a" style="left:1222.40px;top:311.64px;font-size:9.6px;color:#3a3a3a;transform:scaleX(0.89);transform-origin:0 0;">Showers&nbsp;Pass&nbsp;Portland</div>
<div class="a" style="left:1388.40px;top:311.64px;font-size:9.6px;color:#3a3a3a;transform:scaleX(0.92);transform-origin:0 0;">Pick&nbsp;List</div>
<div class="a" style="left:1528.10px;top:313.10px;width:9.70px;height:7.60px;background:#fff;border:1.2px solid #707070;border-radius:1px"></div>
<div class="a" style="left:124.00px;top:139.32px;width:1417.50px;height:1.00px;background:#7f9c98"></div>
<div class="a" style="left:124.00px;top:175.98px;width:1417.50px;height:1.00px;background:#7f9c98"></div>
<div class="a" style="left:124.00px;top:188.20px;width:1417.50px;height:1.00px;background:#7f9c98"></div>
<div class="a" style="left:124.00px;top:200.42px;width:1417.50px;height:1.00px;background:#7f9c98"></div>
<div class="a" style="left:124.00px;top:212.64px;width:1417.50px;height:1.00px;background:#7f9c98"></div>
<div class="a" style="left:124.00px;top:224.86px;width:1417.50px;height:1.00px;background:#7f9c98"></div>
<div class="a" style="left:124.00px;top:237.08px;width:1417.50px;height:1.00px;background:#7f9c98"></div>
<div class="a" style="left:124.00px;top:249.30px;width:1417.50px;height:1.00px;background:#7f9c98"></div>
<div class="a" style="left:124.00px;top:261.52px;width:1417.50px;height:1.00px;background:#7f9c98"></div>
<div class="a" style="left:124.00px;top:273.74px;width:1417.50px;height:1.00px;background:#7f9c98"></div>
<div class="a" style="left:124.00px;top:285.96px;width:1417.50px;height:1.00px;background:#7f9c98"></div>
<div class="a" style="left:124.00px;top:298.18px;width:1417.50px;height:1.00px;background:#7f9c98"></div>
<div class="a" style="left:124.00px;top:310.40px;width:1417.50px;height:1.00px;background:#7f9c98"></div>
<div class="a" style="left:124.00px;top:322.62px;width:1417.50px;height:1.00px;background:#7f9c98"></div>
<div class="a" style="left:124.00px;top:151.44px;width:1417.50px;height:1.20px;background:repeating-linear-gradient(90deg,#34405a 0 1px,#7a8aa0 1px 2px)"></div>
<div class="a" style="left:124.00px;top:163.66px;width:1417.50px;height:1.20px;background:repeating-linear-gradient(90deg,#34405a 0 1px,#7a8aa0 1px 2px)"></div>
<div class="a" style="left:219.30px;top:127.60px;width:1.40px;height:195.52px;background:#6f8f8b"></div>
<div class="a" style="left:385.80px;top:127.60px;width:1.40px;height:195.52px;background:#6f8f8b"></div>
<div class="a" style="left:551.80px;top:127.60px;width:1.40px;height:195.52px;background:#6f8f8b"></div>
<div class="a" style="left:717.80px;top:127.60px;width:1.40px;height:195.52px;background:#6f8f8b"></div>
<div class="a" style="left:1051.30px;top:127.60px;width:1.40px;height:195.52px;background:#6f8f8b"></div>
<div class="a" style="left:1218.80px;top:127.60px;width:1.40px;height:195.52px;background:#6f8f8b"></div>
<div class="a" style="left:1384.80px;top:127.60px;width:1.40px;height:195.52px;background:#6f8f8b"></div>
<div class="a" style="left:1523.30px;top:127.60px;width:1.40px;height:195.52px;background:#6f8f8b"></div>
<div class="a" style="left:1522.30px;top:121.80px;width:21.90px;height:47.40px;border:1.8px solid #e9a23a"></div>
<svg class="a" style="left:939.5px;top:635.5px" width="12" height="19" viewBox="0 0 12 19"><path d="M1 1 L1 14 L4 11 L7 17.5 L9 16.5 L6.5 10.5 L10.5 10.5 Z" fill="#fff" stroke="#999" stroke-width="0.7"/><path d="M1 1 L1 14" stroke="#111" stroke-width="0.9"/><path d="M5.8 10.2 L10.4 10.2" stroke="#444" stroke-width="1"/></svg>
<div class="btn" style="left:286.4px;top:679.1px;width:68.1px;height:13.3px"></div>
<div class="a" style="left:290.00px;top:678.75px;font-size:8.45px;color:#222;letter-spacing:0.1px">Consolidate</div>
<svg class="a" style="left:338.20px;top:679.80px" width="13" height="11" viewBox="0 0 13 11"><path d="M0.5 4 L6 0.8 L12.5 3.5 L12.5 9 L7 10.5 L0.5 8.5Z" fill="#c98a55"/><path d="M3 3 L9.5 6 L9.5 10" stroke="#7a3020" stroke-width="1.6" fill="none"/><path d="M1 4.5 L6.5 7 L12 5" stroke="#f0c090" stroke-width="0.8" fill="none"/></svg>
<div class="a" style="left:358.00px;top:680.20px;width:8.60px;height:8.50px;background:#fff;border-top:1.5px solid #666;border-left:1.5px solid #666;border-right:1px solid #ddd;border-bottom:1px solid #ddd"></div>
<svg class="a" style="left:372.20px;top:680.00px" width="13" height="11" viewBox="0 0 13 11"><path d="M0.5 4 L6 0.8 L12.5 3.5 L12.5 9 L7 10.5 L0.5 8.5Z" fill="#c98a55"/><path d="M3 3 L9.5 6 L9.5 10" stroke="#7a3020" stroke-width="1.6" fill="none"/><path d="M1 4.5 L6.5 7 L12 5" stroke="#f0c090" stroke-width="0.8" fill="none"/></svg>
<div class="a" style="left:124.30px;top:696.60px;width:237.00px;height:30.00px;border-top:1px solid #c4c4c4;border-left:1px solid #c4c4c4"></div>
<div class="a" style="left:129.00px;top:692.00px;width:73.00px;height:8.00px;background:#fbfbfd"></div>
<div class="a" style="left:131.90px;top:692.74px;font-size:9.6px;color:#222;transform:scaleX(0.91);transform-origin:0 0">Batch Processing</div>
<svg class="a" style="left:131.20px;top:705.30px" width="9" height="9" viewBox="0 0 9 9"><circle cx="4.5" cy="4.5" r="3.6" fill="#fff"/><path d="M1.6 6.8 A3.6 3.6 0 0 1 7.2 1.8" stroke="#444" stroke-width="1.2" fill="none"/><path d="M7.4 2.2 A3.6 3.6 0 0 1 2 7.4" stroke="#ddd" stroke-width="1" fill="none"/><circle cx="4.5" cy="4.5" r="1.4" fill="#111"/></svg>
<div class="a" style="left:144.00px;top:705.26px;font-size:7.4px;color:#333;">To Pick</div>
<svg class="a" style="left:177.50px;top:705.30px" width="9" height="9" viewBox="0 0 9 9"><circle cx="4.5" cy="4.5" r="3.6" fill="#fff"/><path d="M1.6 6.8 A3.6 3.6 0 0 1 7.2 1.8" stroke="#444" stroke-width="1.2" fill="none"/><path d="M7.4 2.2 A3.6 3.6 0 0 1 2 7.4" stroke="#ddd" stroke-width="1" fill="none"/></svg>
<div class="a" style="left:191.30px;top:705.26px;font-size:7.4px;color:#333;">To Pack</div>
<svg class="a" style="left:229.80px;top:705.30px" width="9" height="9" viewBox="0 0 9 9"><circle cx="4.5" cy="4.5" r="3.6" fill="#eee"/><path d="M1.6 6.8 A3.6 3.6 0 0 1 7.2 1.8" stroke="#999" stroke-width="1.2" fill="none"/><path d="M7.4 2.2 A3.6 3.6 0 0 1 2 7.4" stroke="#ddd" stroke-width="1" fill="none"/></svg>
<div class="a" style="left:243.60px;top:706.36px;font-size:7.15px;color:#999;">Ship now</div>
<div class="a" style="left:280.00px;top:705.00px;width:9.20px;height:8.50px;background:#fff;border-top:1.5px solid #666;border-left:1.5px solid #666;border-right:1px solid #ddd;border-bottom:1px solid #ddd"></div>
<svg class="a" style="left:280.00px;top:705.00px" width="9.2" height="8.5" viewBox="0 0 10 9"><path d="M2.4 4.2 L4.3 6.4 L8.2 1.8" stroke="#111" stroke-width="1.5" fill="none"/></svg>
<svg class="a" style="left:293.80px;top:706.00px" width="11" height="9" viewBox="0 0 11 9"><path d="M1.6 5.2 L2.6 1.2 Q3.2 0.4 4.4 0.6 L9.4 5.2 Z" fill="#fafafa" stroke="#555" stroke-width="0.9"/><rect x="0.6" y="5" width="9.8" height="3.5" rx="0.6" fill="#e6df8c" stroke="#6a6a4a" stroke-width="0.9"/><path d="M2 6.6 H9" stroke="#f6f2c0" stroke-width="0.6"/></svg>
<div class="a" style="left:305.90px;top:697.60px;width:56.70px;height:22.00px;border:2px solid #e89c2c"></div>
<div class="btn" style="left:308.4px;top:701.8px;width:48.6px;height:13.5px"></div>
<div class="a" style="left:318.00px;top:702.14px;font-size:8.3px;color:#222;">Process</div>
<div class="btn" style="left:1304px;top:702.3px;width:61.5px;height:13.7px"></div>
<div class="a" style="left:1313.80px;top:703.05px;font-size:8.5px;color:#333;">Export EDI</div>
<div class="btn" style="left:1371.2px;top:701.8px;width:43.4px;height:15.5px"></div>
<svg class="a" style="left:1374.4px;top:702.5px" width="14" height="12" viewBox="0 0 14 12"><path d="M5.2 1.8 C8.6 2.2 7.6 6.4 11.4 9.6" stroke="#d8441e" stroke-width="3.4" fill="none" stroke-linecap="round"/><path d="M6 2.4 C7.8 3 7.4 5.6 9 7.6" stroke="#f4a070" stroke-width="0.8" fill="none"/><ellipse cx="3.8" cy="9.2" rx="3.4" ry="2.3" fill="#8a6418"/><ellipse cx="3.2" cy="8.6" rx="1.8" ry="1" fill="#d8b450"/></svg>
<div class="a" style="left:1390.60px;top:703.08px;font-size:8.6px;color:#333;">RMC</div>
<div class="btn" style="left:1416.8px;top:701.8px;width:67.7px;height:15.5px"></div>
<svg class="a" style="left:1419.70px;top:704.50px" width="11" height="9" viewBox="0 0 11 9"><path d="M1.6 5.2 L2.6 1.2 Q3.2 0.4 4.4 0.6 L9.4 5.2 Z" fill="#fafafa" stroke="#555" stroke-width="0.9"/><rect x="0.6" y="5" width="9.8" height="3.5" rx="0.6" fill="#e6df8c" stroke="#6a6a4a" stroke-width="0.9"/><path d="M2 6.6 H9" stroke="#f6f2c0" stroke-width="0.6"/></svg>
<div class="a" style="left:1434.60px;top:703.08px;font-size:8.7px;color:#333;">Print/Export</div>
<div class="btn" style="left:1487.4px;top:701.2px;width:18.4px;height:16.3px"></div>
<svg class="a" style="left:1489.3px;top:703.5px" width="14" height="11" viewBox="0 0 14 11"><rect x="0.5" y="0.5" width="13" height="10" fill="#fff" stroke="#1a7a2a" stroke-width="1.4"/><path d="M3 2 L11 9 M11 2 L3 9" stroke="#1a7a2a" stroke-width="2"/><path d="M1 5.5 h4" stroke="#1a7a2a" stroke-width="1"/></svg>
<div class="btn" style="left:1508.4px;top:701.8px;width:39.2px;height:15.5px"></div>
<div class="a" style="left:1516.80px;top:703.08px;font-size:8.6px;color:#333;">Close</div>
</div>
</body></html>
